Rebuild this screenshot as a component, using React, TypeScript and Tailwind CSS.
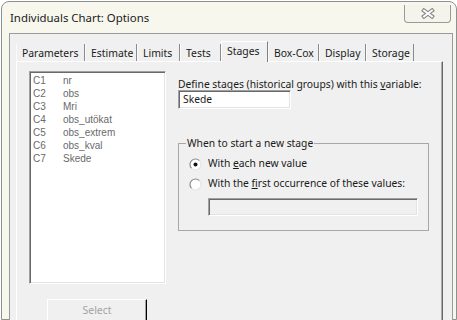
import React from "react";

const tabs = [
  { label: "Parameters", w: "w-[69px]" },
  { label: "Estimate", w: "w-[52px]" },
  { label: "Limits", w: "w-[43px]" },
  { label: "Tests", w: "w-[41px]" },
  { label: "Stages", w: "w-[47px]", active: true },
  { label: "Box-Cox", w: "w-[51px]" },
  { label: "Display", w: "w-[47px]" },
  { label: "Storage", w: "w-[48px]" },
];

const columns = [
  ["C1", "nr"],
  ["C2", "obs"],
  ["C3", "Mri"],
  ["C4", "obs_utökat"],
  ["C5", "obs_extrem"],
  ["C6", "obs_kval"],
  ["C7", "Skede"],
];

function Radio({ checked }: { checked?: boolean }) {
  return (
    <svg width="13" height="13" viewBox="0 0 13 13" className="shrink-0">
      <circle cx="6.5" cy="6.5" r="5.5" fill="#fff" />
      <path d="M2.61 10.39 A5.5 5.5 0 0 1 10.39 2.61" fill="none" stroke="#8a8a8a" strokeWidth="1.2" />
      <path d="M10.39 2.61 A5.5 5.5 0 0 1 2.61 10.39" fill="none" stroke="#e4e4e4" strokeWidth="1.2" />
      {checked && <circle cx="6.5" cy="6.5" r="2" fill="#111" />}
    </svg>
  );
}

function CloseGlyph() {
  return (
    <svg width="14" height="11" viewBox="0 0 14 11">
      <g stroke="#7d7d7d" strokeWidth="4" strokeLinecap="square">
        <line x1="3" y1="2.5" x2="11" y2="8.5" />
        <line x1="11" y1="2.5" x2="3" y2="8.5" />
      </g>
      <g stroke="#fafafa" strokeWidth="2" strokeLinecap="square">
        <line x1="3" y1="2.5" x2="11" y2="8.5" />
        <line x1="11" y1="2.5" x2="3" y2="8.5" />
      </g>
    </svg>
  );
}

export default function App() {
  return (
    <div className="w-[457px] h-[320px] overflow-hidden bg-white font-['Noto_Sans',sans-serif] text-[#1a1a1a]">
      <div className="ml-[1px] mt-[1px] w-[456px] h-[319px] rounded-t-[8px] border border-[#8f9090] bg-[#f7f7ee] flex flex-col">
        {/* title bar */}
        <div className="h-[31px] flex justify-between items-start shrink-0">
          <span className="pl-[8px] pt-[8px] text-[11.4px] leading-[16px]">Individuals Chart: Options</span>
          <div className="mt-[3px] mr-[5px] w-[47px] h-[18px] rounded-b-[4px] border border-t-0 border-[#9a9a9a] bg-[#f4f4ec] flex items-center justify-center">
            <CloseGlyph />
          </div>
        </div>

        {/* client */}
        <div className="flex-1 ml-[7px] mr-[3px] border border-b-0 border-[#9a9a9a] bg-[#f0f0f0] flex flex-col">
          <div className="flex items-end h-[21px] mt-[6px] ml-[6px] text-[10.4px]">
            {tabs.map((t) =>
              t.active ? (
                <div
                  key={t.label}
                  className={`${t.w} h-[21px] relative z-10 -mb-[1px] border-l border-t border-white border-r border-r-[#7f7f7f] bg-[#f0f0f0] pl-[5px] pt-[2px] leading-[14px]`}
                >
                  {t.label}
                </div>
              ) : (
                <div
                  key={t.label}
                  className={`${t.w} h-[17px] border-l border-l-[#fafafa] border-r border-r-[#8a8a8a] pl-[5px] pt-[2px] leading-[14px]`}
                >
                  {t.label}
                </div>
              )
            )}
          </div>

          <div className="flex-1 ml-[6px] mr-[9px] border-t border-l border-white border-r border-r-[#6a6a6a] shadow-[inset_-1px_0_0_#a9a9a9] bg-[#f0f0f0] flex pl-[12px] pt-[9px]">
            {/* column list */}
            <div className="flex flex-col">
              <div className="w-[137px] h-[213px] bg-white border border-t-[#a0a0a0] border-l-[#a0a0a0] border-r-white border-b-white shadow-[inset_1px_1px_0_#696969,inset_-1px_-1px_0_#e3e3e3] pl-[3px] pt-[2px] font-['Liberation_Sans',sans-serif] text-[10px] leading-[13px] text-[#6a6a6a]">
                {columns.map(([c, n]) => (
                  <div key={c} className="grid grid-cols-[30px_1fr]">
                    <span>{c}</span>
                    <span>{n}</span>
                  </div>
                ))}
              </div>
              <div className="mt-[15px] ml-[18px] w-[100px] h-[24px] border border-t-white border-l-white border-r-black border-b-black shadow-[inset_-1px_-1px_0_#a0a0a0] flex items-center justify-center text-[10.4px] text-[#a3a3a3]">
                Select
              </div>
            </div>

            {/* stage settings */}
            <div className="ml-[12px] mt-[7px] flex flex-col text-[10.3px]">
              <div className="leading-[12px]">
                Define stages (historical groups) with this <span className="underline">v</span>ariable:
              </div>
              <div className="w-[113px] h-[19px] bg-white border border-t-[#a0a0a0] border-l-[#a0a0a0] border-r-white border-b-white shadow-[inset_1px_1px_0_#696969,inset_-1px_-1px_0_#e3e3e3] pl-[4px] leading-[17px]">
                Skede
              </div>

              <fieldset className="mt-[28px] w-[251px] border border-[#a8a8a8] pb-[14px]">
                <legend className="ml-[7px] px-[1px] leading-[12px]">When to start a new stage</legend>
                <div className="mt-[8px] ml-[10px] flex items-center gap-[6px] h-[14px]">
                  <Radio checked />
                  <span>
                    With <span className="underline">e</span>ach new value
                  </span>
                </div>
                <div className="mt-[6px] ml-[10px] flex items-center gap-[6px] h-[14px]">
                  <Radio />
                  <span>
                    With the <span className="underline">f</span>irst occurrence of these values:
                  </span>
                </div>
                <div className="mt-[7px] ml-[29px] w-[210px] h-[18px] bg-[#f0f0f0] border border-t-[#a0a0a0] border-l-[#a0a0a0] border-r-white border-b-white shadow-[inset_1px_1px_0_#696969,inset_-1px_-1px_0_#e3e3e3]" />
              </fieldset>
            </div>
          </div>
        </div>
      </div>
    </div>
  );
}
